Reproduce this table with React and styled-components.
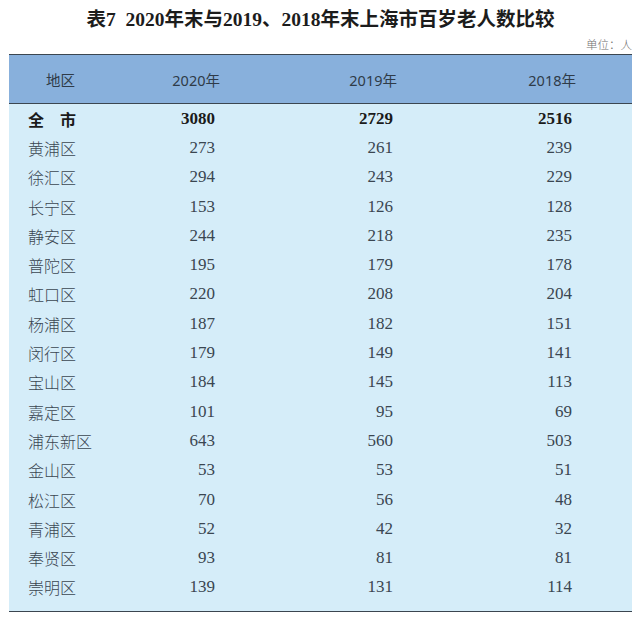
import React from 'react';
import styled, { createGlobalStyle } from 'styled-components';

const GlobalStyle = createGlobalStyle`
  html, body {
    margin: 0;
    padding: 0;
    background: #ffffff;
  }
`;

const Page = styled.div`
  width: 640px;
  height: 618px;
  padding: 0 8px 0 9px;
  box-sizing: border-box;
  background: #fff;
  display: flex;
  flex-direction: column;
`;

const Title = styled.h1`
  margin: 0;
  padding-top: 8px;
  height: 26px;
  line-height: 24px;
  text-align: center;
  font-family: "Liberation Serif", "Noto Sans CJK SC", serif;
  font-weight: 700;
  font-size: 19.5px;
  color: #1c1c1c;
`;

const Unit = styled.div`
  height: 20px;
  line-height: 20px;
  text-align: right;
  font-family: "Noto Sans CJK SC", sans-serif;
  font-size: 11.5px;
  font-weight: 300;
  color: #6f6f6f;
`;

const Table = styled.div`
  border-top: 1.5px solid #3b4650;
  border-bottom: 1.5px solid #3b4650;
  background: #d5edf9;
  padding-bottom: 9px;
`;

const HeadRow = styled.div`
  display: grid;
  grid-template-columns: 111px 100px 177px 179px 1fr;
  height: 48px;
  align-items: center;
  background: #88b0dc;
  border-bottom: 1.5px solid #3b4650;
  font-family: "Noto Sans", "Noto Sans CJK SC", sans-serif;
  font-size: 14.5px;
  color: #2f3b48;
`;

const HeadCell = styled.div`
  text-align: ${p => (p.$label ? 'left' : 'right')};
  padding-left: ${p => (p.$label ? '37px' : '0')};
`;

const Row = styled.div`
  display: grid;
  grid-template-columns: 111px 95px 178px 179px 1fr;
  height: 29.3px;
  align-items: center;
  color: ${p => (p.$total ? '#1b1b1b' : '#3a4651')};
  font-weight: ${p => (p.$total ? 700 : 300)};
`;

const Label = styled.div`
  padding-left: 19px;
  font-family: "Noto Sans CJK SC", sans-serif;
  font-size: 16px;
  font-weight: inherit;
`;

const Num = styled.div`
  text-align: right;
  font-family: "Liberation Serif", serif;
  font-size: 17px;
  font-weight: ${p => (p.$bold ? 700 : 400)};
`;

const rows = [
  ['黄浦区', 273, 261, 239],
  ['徐汇区', 294, 243, 229],
  ['长宁区', 153, 126, 128],
  ['静安区', 244, 218, 235],
  ['普陀区', 195, 179, 178],
  ['虹口区', 220, 208, 204],
  ['杨浦区', 187, 182, 151],
  ['闵行区', 179, 149, 141],
  ['宝山区', 184, 145, 113],
  ['嘉定区', 101, 95, 69],
  ['浦东新区', 643, 560, 503],
  ['金山区', 53, 53, 51],
  ['松江区', 70, 56, 48],
  ['青浦区', 52, 42, 32],
  ['奉贤区', 93, 81, 81],
  ['崇明区', 139, 131, 114],
];

export default function App() {
  return (
    <>
      <GlobalStyle />
      <Page>
        <Title>表7&nbsp;&nbsp;2020年末与2019、2018年末上海市百岁老人数比较</Title>
        <Unit>单位：人</Unit>
        <Table>
          <HeadRow>
            <HeadCell $label>地区</HeadCell>
            <HeadCell>2020年</HeadCell>
            <HeadCell>2019年</HeadCell>
            <HeadCell>2018年</HeadCell>
          </HeadRow>
          <Row $total>
            <Label>全{'\u3000'}市</Label>
            <Num $bold>3080</Num>
            <Num $bold>2729</Num>
            <Num $bold>2516</Num>
          </Row>
          {rows.map(r => (
            <Row key={r[0]}>
              <Label>{r[0]}</Label>
              <Num>{r[1]}</Num>
              <Num>{r[2]}</Num>
              <Num>{r[3]}</Num>
            </Row>
          ))}
        </Table>
      </Page>
    </>
  );
}
